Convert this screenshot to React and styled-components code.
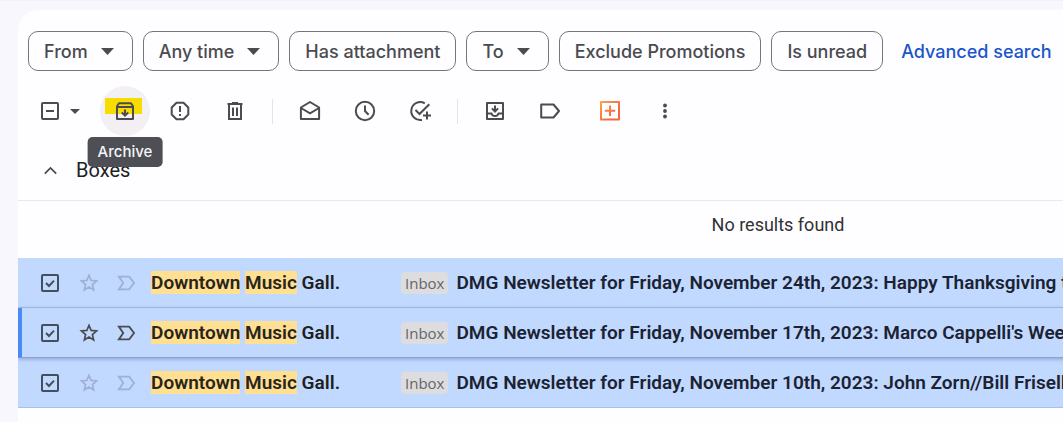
import React from "react";
import styled, { createGlobalStyle } from "styled-components";

const GlobalStyle = createGlobalStyle`
* {
    box-sizing: border-box;
}

body {
    margin: 0;
    background-color: #f7f7fd;
    color: #1f1f1f;
    font-family: Roboto, "Liberation Sans", sans-serif;
    font-size: 18px;
    overflow: hidden;
}
`;

const Page = styled.div`
padding: 9px 0 0 18px;
border-top: 1px solid #f2f1f7;
`;

const Panel = styled.main`
min-height: calc(100vh - 10px);
overflow: hidden;
border-top-left-radius: 20px;
background-color: #fefdff;
`;

const Filters = styled.div`
display: flex;
align-items: center;
gap: 10px;
padding: 21px 10px 0;
white-space: nowrap;
`;

const Chip = styled.button`
display: flex;
flex: none;
align-items: center;
gap: 13px;
height: 40px;
padding: 0 ${(props) => (props.$menu ? "18px" : "15px")} 0 15px;
border: 1px solid #747775;
border-radius: 10px;
background-color: transparent;
color: #4a4b4f;
font: 500 18px Inter, sans-serif;
`;

const AdvancedLink = styled.a`
margin-left: 8px;
color: #1a56cb;
font: 500 18px Inter, sans-serif;
text-decoration: none;
`;

const Toolbar = styled.div`
display: flex;
align-items: center;
gap: 5px;
padding: 15px 7px 0;
`;

const SelectGroup = styled.div`
display: flex;
align-items: center;
width: 70px;
padding-left: 14px;
gap: 9px;
`;

const Check = styled.label`
display: inline-grid;
width: 22px;
height: 22px;
vertical-align: middle;

> * {
    grid-area: 1 / 1;
    width: 22px;
    height: 22px;
    margin: 0;
}

input {
    appearance: none;
}

svg {
    pointer-events: none;
}
`;

const PlainButton = styled.button`
display: inline-flex;
align-items: center;
justify-content: center;
padding: 0;
border: none;
background-color: transparent;
color: ${(props) => (props.$faded ? "#9eb0d3" : "#4b4c50")};
vertical-align: middle;
`;

const ToolButton = styled(PlainButton)`
position: relative;
flex: none;
width: 50px;
height: 50px;
border-radius: 50%;
background-color: ${(props) => (props.$active ? "#f2f0f3" : "transparent")};
margin-left: ${(props) => (props.$spaced ? "5px" : "0")};

svg {
    position: relative;
}
`;

const Marker = styled.span`
position: absolute;
top: 12px;
left: 5px;
width: 37px;
height: 16px;
background-color: #f7dc00;
`;

const Tooltip = styled.span`
position: absolute;
top: 51px;
left: 50%;
z-index: 1;
transform: translateX(-50%);
padding: 0 10px;
border-radius: 5px;
background-color: #4e4f54;
color: #f5f5f7;
font: 500 15px/30px Inter, sans-serif;
`;

const Divider = styled.span`
width: 1px;
height: 25px;
margin: 0 7px;
background-color: #e4e3e7;
`;

const SectionHeader = styled.div`
display: flex;
align-items: center;
gap: 15px;
height: 65px;
padding: 4px 22px 0;
border-bottom: 1px solid #e9e8ec;
`;

const SectionTitle = styled.h2`
margin: 0;
font-size: 20px;
font-weight: 400;
`;

const Empty = styled.p`
min-width: 1520px;
margin: 0;
color: #303134;
line-height: 47px;
padding-bottom: 10px;
text-align: center;
`;

const Mails = styled.table`
width: 100%;
min-width: 1520px;
border-collapse: separate;
border-spacing: 0;
table-layout: fixed;
background-color: #c2d9ff;
`;

const Mail = styled.tr`
height: 50px;
position: relative;
box-shadow: ${(props) => (props.$active ? "0 1px 4px rgba(70, 100, 160, 0.5)" : "none")};

td {
    padding: 0;
    border-bottom: 1px solid ${(props) => (props.$active ? "#8da3cd" : "#a9c0ea")};
    white-space: nowrap;
}

td:first-child {
    padding-left: ${(props) => (props.$active ? "17px" : "21px")};
    border-left: ${(props) => (props.$active ? "4px solid #4a8af4" : "none")};
}
`;

const Col = styled.col`
width: ${(props) => props.$width};
`;

const IconCell = styled.td`
text-align: center;
`;

const Sender = styled.td`
font-size: 19px;
font-weight: 600;

&& {
    padding-left: 7px;
}
`;

const Subject = styled.td`
color: #1b2333;
font-size: 19px;
font-weight: 600;
`;

const Hit = styled.mark`
background-color: #ffdf92;
color: #2a2419;
`;

const Label = styled.span`
display: inline-block;
margin-right: 8px;
padding: 0 4px;
border-radius: 4px;
background-color: #dddcdf;
color: #666;
font: 400 15px/22px "Open Sans", sans-serif;
vertical-align: middle;
`;

const Title = styled.span`
vertical-align: middle;
`;

function Icon({ size = 24, width = 2, children }) {
    return (
        <svg
            width={size}
            height={size}
            viewBox="0 0 24 24"
            fill="none"
            stroke="currentColor"
            strokeWidth={width}
            aria-hidden="true"
        >
            {children}
        </svg>
    );
}

const Caret = () => (
    <svg width="13" height="7" viewBox="0 0 13 7" fill="currentColor" aria-hidden="true">
        <path d="M0 0h13L6.5 7z" />
    </svg>
);

function CheckBox({ label, mixed }) {
    return (
        <Check>
            <input type="checkbox" aria-label={label} defaultChecked={!mixed} />
            <svg viewBox="0 0 22 22" fill="none" stroke={mixed ? "#4b4c50" : "#444f5c"} strokeWidth="2" aria-hidden="true">
                <rect x="3" y="3" width="16" height="16" rx="1" />
                {mixed ? <path d="M7 11h8" /> : <path d="M7 11l3 3 5-5.400" />}
            </svg>
        </Check>
    );
}

const StarIcon = () => (
    <Icon size={22} width={1.8}>
        <path d="M12 3.600l2.300 5.600 6 .5-4.600 4 1.400 5.900-5.100-3.200-5.100 3.200 1.400-5.900-4.600-4 6-.5z" />
    </Icon>
);

const ImportantIcon = () => (
    <Icon size={22}>
        <path d="M4.200 5h11.300l5.300 7-5.300 7H4.200l4.800-7z" />
    </Icon>
);

const filters = [
    { text: "From", menu: true },
    { text: "Any time", menu: true },
    { text: "Has attachment" },
    { text: "To", menu: true },
    { text: "Exclude Promotions" },
    { text: "Is unread" },
];

const mails = [
    { id: 1, subject: "DMG Newsletter for Friday, November 24th, 2023: Happy Thanksgiving to" },
    { id: 2, subject: "DMG Newsletter for Friday, November 17th, 2023: Marco Cappelli's Week", active: true },
    { id: 3, subject: "DMG Newsletter for Friday, November 10th, 2023: John Zorn//Bill Frisell/" },
];

export default function App() {
    return (
        <>
            <GlobalStyle />
            <Page>
                <Panel>
                    <Filters>
                        {filters.map((filter) => (
                            <Chip key={filter.text} type="button" $menu={filter.menu}>
                                {filter.text}
                                {filter.menu && <Caret />}
                            </Chip>
                        ))}
                        <AdvancedLink href="#advanced">Advanced search</AdvancedLink>
                    </Filters>

                    <Toolbar>
                        <SelectGroup>
                            <CheckBox label="Select" mixed />
                            <PlainButton type="button" aria-label="Select options">
                                <svg width="10" height="5" viewBox="0 0 10 5" fill="currentColor" aria-hidden="true">
                                    <path d="M0 0h10L5 5z" />
                                </svg>
                            </PlainButton>
                        </SelectGroup>
                        <ToolButton type="button" $active>
                            <Marker />
                            <Icon>
                                <path d="M4 7.200L6 4.200h12l2 3V20H4z" strokeLinejoin="round" />
                                <path d="M4 8h16" />
                                <path d="M12 10.500v5M8.800 13.500l3.200 3.200 3.200-3.200" />
                            </Icon>
                            <Tooltip>Archive</Tooltip>
                        </ToolButton>
                        <ToolButton type="button" aria-label="Report spam">
                            <Icon>
                                <path d="M8.500 3.700h7l4.800 4.800v7l-4.800 4.800h-7l-4.800-4.800v-7z" strokeLinejoin="round" />
                                <path d="M12 7v6M12 15v2" />
                            </Icon>
                        </ToolButton>
                        <ToolButton type="button" aria-label="Delete">
                            <Icon>
                                <path d="M6 6v14h12V6M4.500 5h15M9 4h6" />
                                <path d="M10 8.500v8.500M14 8.500v8.500" />
                            </Icon>
                        </ToolButton>
                        <Divider />
                        <ToolButton type="button" aria-label="Mark as read">
                            <Icon>
                                <path d="M2.900 8.500L12 3l9.100 5.500v11.600H2.900z" strokeLinejoin="round" />
                                <path d="M3 9l9 5.300L21 9" />
                            </Icon>
                        </ToolButton>
                        <ToolButton type="button" aria-label="Snooze">
                            <Icon>
                                <circle cx="12" cy="12" r="9.200" />
                                <path d="M12 6.500V12l3.600 3.700" />
                            </Icon>
                        </ToolButton>
                        <ToolButton type="button" aria-label="Add to tasks">
                            <Icon>
                                <path d="M16.800 4.300A9 9 0 1 0 14 20.900" />
                                <path d="M7.500 11l4 4L21.300 5.200M19 12.500v8M15 16.500h8" />
                            </Icon>
                        </ToolButton>
                        <Divider />
                        <ToolButton type="button" aria-label="Move to inbox">
                            <Icon>
                                <path d="M4 4h16v16H4z" strokeLinejoin="round" />
                                <path d="M4 14.500h4.500c.6 1.700 1.700 2.500 3.500 2.500s2.900-.8 3.500-2.500H20" />
                                <path d="M12 6.500v5M8.900 9.400l3.100 3.100 3.100-3.100" />
                            </Icon>
                        </ToolButton>
                        <ToolButton type="button" aria-label="Labels">
                            <Icon>
                                <path d="M3.200 5.500h12.300L21 12l-5.500 6.500H3.200z" strokeLinejoin="round" />
                            </Icon>
                        </ToolButton>
                        <ToolButton type="button" aria-label="Add" $spaced>
                            <Icon>
                                <defs>
                                    <linearGradient id="warm" gradientUnits="userSpaceOnUse" x1="3" y1="3" x2="21" y2="21">
                                        <stop offset="0" stopColor="#f9a04c" />
                                        <stop offset="0.7" stopColor="#f4683f" />
                                    </linearGradient>
                                </defs>
                                <path
                                    d="M3 3h18v17.500H3zM12 6.500v10.500M6.800 11.800h10.400"
                                    stroke="url(#warm)"
                                    strokeLinejoin="round"
                                />
                            </Icon>
                        </ToolButton>
                        <ToolButton type="button" aria-label="More">
                            <Icon>
                                <g fill="currentColor" stroke="none">
                                    <circle cx="12" cy="6.500" r="1.900" />
                                    <circle cx="12" cy="12" r="1.900" />
                                    <circle cx="12" cy="17.500" r="1.900" />
                                </g>
                            </Icon>
                        </ToolButton>
                    </Toolbar>

                    <SectionHeader>
                        <PlainButton type="button" aria-label="Collapse Boxes">
                            <Icon size={21}>
                                <path d="M5.500 15.500L12 9l6.500 6.500" />
                            </Icon>
                        </PlainButton>
                        <SectionTitle>Boxes</SectionTitle>
                    </SectionHeader>
                    <Empty>No results found</Empty>

                    <Mails>
                        <colgroup>
                            <Col $width="52px" />
                            <Col $width="37px" />
                            <Col $width="37px" />
                            <Col $width="257px" />
                            <Col />
                        </colgroup>
                        <tbody>
                            {mails.map((mail) => (
                                <Mail key={mail.id} $active={mail.active}>
                                    <td>
                                        <CheckBox label={"Select " + mail.subject} />
                                    </td>
                                    <IconCell>
                                        <PlainButton type="button" aria-label="Star" $faded={!mail.active}>
                                            <StarIcon />
                                        </PlainButton>
                                    </IconCell>
                                    <IconCell>
                                        <PlainButton type="button" aria-label="Mark as important" $faded={!mail.active}>
                                            <ImportantIcon />
                                        </PlainButton>
                                    </IconCell>
                                    <Sender>
                                        <Hit>Downtown</Hit> <Hit>Music</Hit> Gall.
                                    </Sender>
                                    <Subject>
                                        <Label>Inbox</Label>
                                        <Title>{mail.subject}</Title>
                                    </Subject>
                                </Mail>
                            ))}
                        </tbody>
                    </Mails>
                </Panel>
            </Page>
        </>
    );
}
